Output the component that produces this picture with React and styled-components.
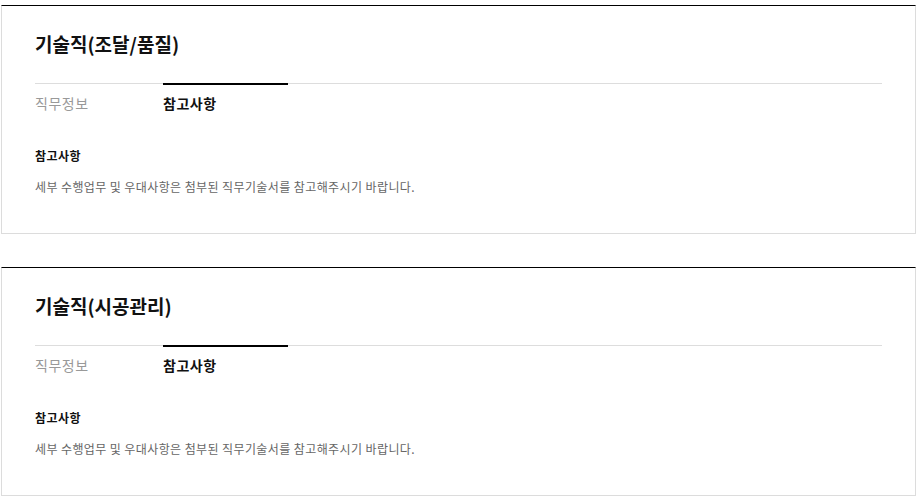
import React from "react";
import styled, { createGlobalStyle } from "styled-components";

const GlobalStyle = createGlobalStyle`
  html, body {
    margin: 0;
    padding: 0;
    background: #fff;
  }
  body {
    font-family: "Noto Sans CJK KR", "Noto Sans", sans-serif;
    color: #111;
  }
`;

const Page = styled.div`
  width: 915px;
  padding: 5px 0 0 1px;
`;

const Card = styled.section`
  box-sizing: border-box;
  border: 1px solid #dcdcdc;
  border-top: 1px solid #000;
  padding: 25px 33px 37px;
  background: #fff;

  & + & {
    margin-top: 33px;
  }
`;

const Title = styled.h3`
  margin: 0;
  font-size: 19px;
  line-height: 26px;
  font-weight: 700;
  letter-spacing: 0;
  color: #111;
`;

const TabList = styled.ul`
  display: flex;
  gap: 3px;
  margin: 26px 0 0;
  padding: 0;
  list-style: none;
  border-top: 1px solid #dddddd;
`;

const Tab = styled.li`
  width: 125px;
  margin-top: -1px;
  padding-top: 8px;
  border-top: 2px solid ${(p) => (p.$active ? "#000" : "transparent")};
  font-size: 14px;
  line-height: 20px;
  letter-spacing: 0.5px;
  font-weight: ${(p) => (p.$active ? 700 : 400)};
  color: ${(p) => (p.$active ? "#111" : "#999")};
  cursor: pointer;
`;

const Section = styled.div`
  margin-top: 34px;
`;

const SubTitle = styled.h4`
  margin: 0;
  font-size: 12px;
  line-height: 18px;
  font-weight: 700;
  letter-spacing: 0.5px;
  color: #111;
`;

const Desc = styled.p`
  margin: 13px 0 0;
  font-size: 12px;
  line-height: 18px;
  letter-spacing: 0.4px;
  color: #666;
`;

const jobs = [
  { id: 1, title: "기술직(조달/품질)" },
  { id: 2, title: "기술직(시공관리)" },
];

const JobCard = ({ title }) => (
  <Card>
    <Title>{title}</Title>
    <TabList>
      <Tab>직무정보</Tab>
      <Tab $active>참고사항</Tab>
    </TabList>
    <Section>
      <SubTitle>참고사항</SubTitle>
      <Desc>세부 수행업무 및 우대사항은 첨부된 직무기술서를 참고해주시기 바랍니다.</Desc>
    </Section>
  </Card>
);

export default function App() {
  return (
    <>
      <GlobalStyle />
      <Page>
        {jobs.map((job) => (
          <JobCard key={job.id} title={job.title} />
        ))}
      </Page>
    </>
  );
}
